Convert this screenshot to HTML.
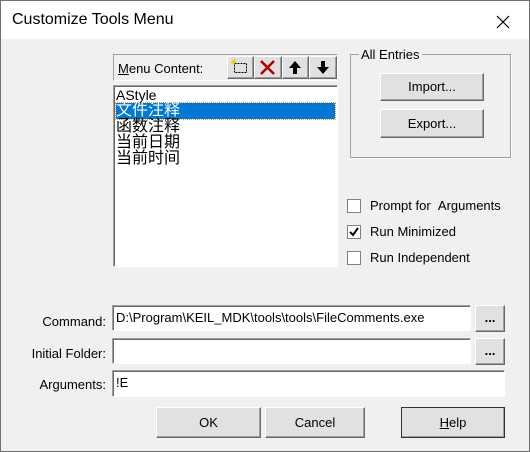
<!DOCTYPE html>
<html><head><meta charset="utf-8"><style>
*{margin:0;padding:0;box-sizing:border-box}
body{width:530px;height:452px;overflow:hidden;font-family:"Liberation Sans","Noto Sans CJK SC",sans-serif;font-size:13px;color:#000;background:#f0f0f0;position:relative}
.win{position:absolute;left:0;top:0;width:530px;height:452px;border:1px solid #707070;background:#f0f0f0}
.title{position:absolute;left:0;top:0;width:528px;height:38px;background:#fff}
.title span{position:absolute;left:11px;top:10px;font-size:16px}
.a{position:absolute}
.btn{position:absolute;background:#e1e1e1;border:1px solid;border-color:#fff #696969 #696969 #fff;box-shadow:inset -1px -1px 0 #a0a0a0;text-align:center}
.sunk{position:absolute;background:#fff;border:1px solid;border-color:#a0a0a0 #fff #fff #a0a0a0;box-shadow:inset 1px 1px 0 #696969}
.lbl{position:absolute;text-align:right;width:100px;left:5px}
.cb{position:absolute;left:346px;width:14px;height:14px;background:#fff;border:1px solid #808080}
.cj{font-size:16px;line-height:16px}
</style></head><body><div class="win">
<div class="title"><span>Customize Tools Menu</span>
<svg class="a" style="left:495px;top:14px" width="14" height="14"><path d="M1 1L13 13M13 1L1 13" stroke="#000" stroke-width="1.2"/></svg></div>

<div class="a" style="left:112px;top:53px;width:225px;height:27px;border:1px solid;border-color:#a0a0a0 #fff #fff #a0a0a0"></div>
<div class="a" style="left:117px;top:60px"><u>M</u>enu Content:</div>
<div class="btn" style="left:226px;top:55px;width:27px;height:23px"><svg width="25" height="21"><rect x="6.5" y="6.5" width="12" height="9" fill="none" stroke="#000" stroke-dasharray="2 1"/><path d="M4 3l3 3M7 2v4M3 6h4" stroke="#e8d000" stroke-width="1.5"/></svg></div>
<div class="btn" style="left:253px;top:55px;width:28px;height:23px"><svg width="26" height="21"><path d="M6 4L19 17M19 4L6 17" stroke="#b00000" stroke-width="2.5"/></svg></div>
<div class="btn" style="left:281px;top:55px;width:27px;height:23px"><svg width="25" height="21"><path d="M12 4L6 11h4v6h4v-6h4z" fill="#000"/></svg></div>
<div class="btn" style="left:308px;top:55px;width:28px;height:23px"><svg width="26" height="21"><path d="M13 17L7 10h4V4h4v6h4z" fill="#000"/></svg></div>

<div class="sunk" style="left:112px;top:84px;width:225px;height:182px"></div>
<div class="a" style="left:115px;top:86px;line-height:16px;font-size:14px">AStyle</div>
<div class="a cj" style="left:115px;top:102px;width:219px;height:16px;background:#0078d7;color:#fff;outline:1px dotted #f0a030">文件注释</div>
<div class="a cj" style="left:115px;top:118px">函数注释<br>当前日期<br>当前时间</div>

<div class="a" style="left:349px;top:53px;width:161px;height:104px;border:1px solid #a0a0a0;box-shadow:1px 1px 0 #fff"></div>
<div class="a" style="left:358px;top:46px;background:#f0f0f0;padding:0 2px">All Entries</div>
<div class="btn" style="left:379px;top:72px;width:104px;height:28px;line-height:26px">Import...</div>
<div class="btn" style="left:379px;top:108px;width:104px;height:29px;line-height:27px">Export...</div>

<div class="cb" style="top:198px"></div><div class="a" style="left:369px;top:197px">Prompt for &nbsp;Arguments</div>
<div class="cb" style="top:224px"><svg width="12" height="12" style="position:absolute;left:0;top:0"><path d="M2 6l3 3 5-7" stroke="#000" stroke-width="2" fill="none"/></svg></div><div class="a" style="left:369px;top:223px">Run Minimized</div>
<div class="cb" style="top:250px"></div><div class="a" style="left:369px;top:249px">Run Independent</div>

<div class="lbl" style="top:313px">Command:</div>
<div class="sunk" style="left:111px;top:304px;width:359px;height:26px"></div>
<div class="a" style="left:115px;top:309px">D:\Program\KEIL_MDK\tools\tools\FileComments.exe</div>
<div class="btn" style="left:474px;top:304px;width:30px;height:27px;line-height:24px;font-weight:bold">...</div>

<div class="lbl" style="top:345px">Initial Folder:</div>
<div class="sunk" style="left:111px;top:337px;width:359px;height:26px"></div>
<div class="btn" style="left:474px;top:337px;width:30px;height:27px;line-height:24px;font-weight:bold">...</div>

<div class="lbl" style="top:376px">Arguments:</div>
<div class="sunk" style="left:111px;top:369px;width:393px;height:27px"></div>
<div class="a" style="left:115px;top:374px">!E</div>

<div class="btn" style="left:155px;top:406px;width:105px;height:31px;line-height:29px">OK</div>
<div class="btn" style="left:264px;top:406px;width:100px;height:31px;line-height:29px">Cancel</div>
<div class="btn" style="left:400px;top:406px;width:104px;height:31px;line-height:29px;border:1px solid #333"><u>H</u>elp</div>
</div></body></html>
